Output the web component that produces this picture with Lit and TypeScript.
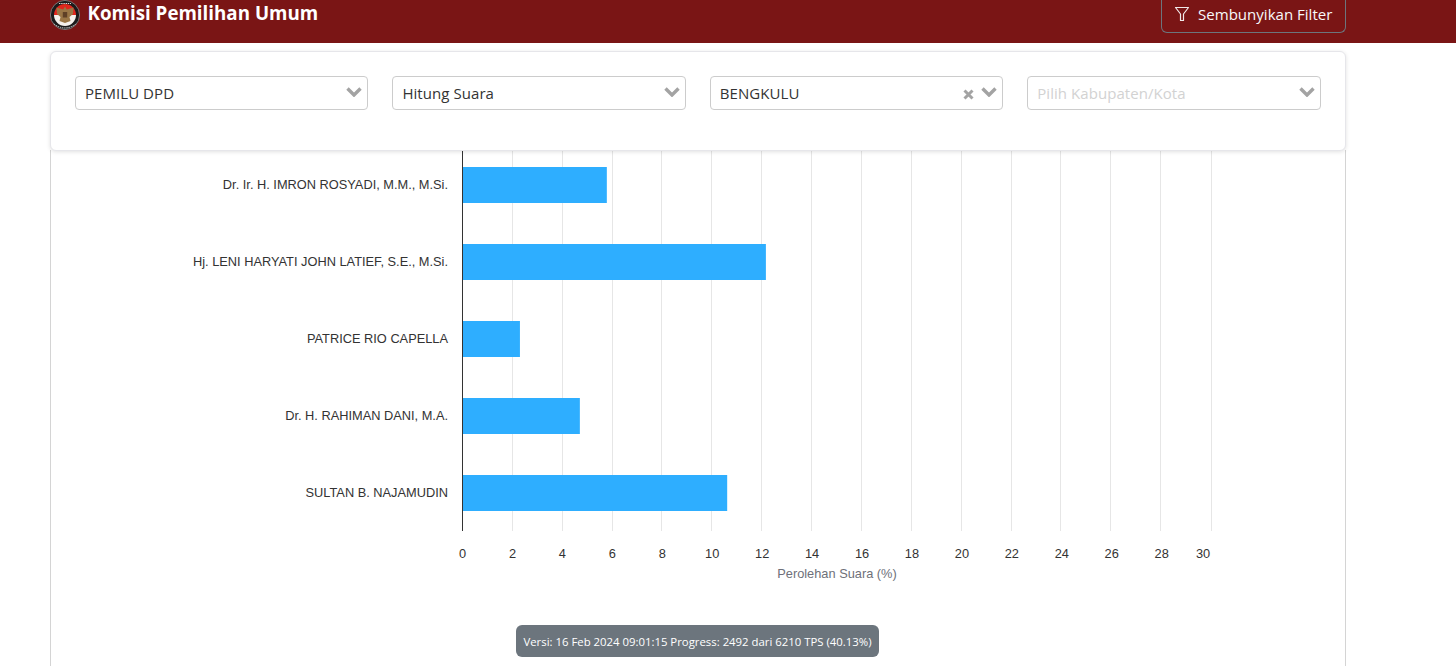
import { LitElement, html, css, svg } from "lit";
import { customElement } from "lit/decorators.js";

const CANDIDATES = [
  { name: "Dr. Ir. H. IMRON ROSYADI, M.M., M.Si.", value: 5.78, top: 17 },
  { name: "Hj. LENI HARYATI JOHN LATIEF, S.E., M.Si.", value: 12.15, top: 94 },
  { name: "PATRICE RIO CAPELLA", value: 2.3, top: 171 },
  { name: "Dr. H. RAHIMAN DANI, M.A.", value: 4.7, top: 248 },
  { name: "SULTAN B. NAJAMUDIN", value: 10.6, top: 325 },
];
const ORIGIN = 462.5;
const UNIT = 24.97;
const TICKS = Array.from({ length: 16 }, (_, i) => i * 2);
const GRID_PX = [512, 562, 612, 661, 711, 761, 811, 861, 911, 961, 1011, 1060, 1110, 1160, 1211];

@customElement("app-root")
export class AppRoot extends LitElement {
  static styles = css`
    :host { display: block; height: 666px; overflow: hidden; background: #fff; font-family: "Open Sans", "Noto Sans", sans-serif; position: relative; }
    .header { height: 43px; background: #7a1515; box-sizing: border-box; padding: 0 110px 0 50px; display: flex; justify-content: space-between; align-items: flex-start; overflow: hidden; }
    .brand { display: flex; align-items: flex-start; gap: 7.5px; color: #fff; font-weight: 700; font-size: 18.75px; line-height: 26px; }
    .brand svg { width: 30px; height: 30px; flex: none; }
    .toggle { display: flex; align-items: center; gap: 8px; box-sizing: border-box; width: 185px; height: 33px; padding: 0 12px 4px 12px; border: 1px solid #6c757d; border-top: 0; border-radius: 0 0 6px 6px; color: #f8f9fa; font-size: 15.05px; white-space: nowrap; }
    .toggle svg { width: 16px; height: 16px; flex: none; }
    .main { margin: 0 110px 0 50px; }
    .filters { position: relative; z-index: 1; margin-top: 8px; height: 100px; box-sizing: border-box; padding: 24px 24.4px 24px 24px; background: #fff; border: 1px solid #e6e6ea; border-radius: 6px; box-shadow: 0 1px 4px rgba(0,0,0,.12); display: grid; grid-template-columns: repeat(4, 1fr); gap: 24px; align-items: start; }
    .select { display: flex; align-items: center; height: 34px; box-sizing: border-box; padding: 0 5px 0 9px; border: 1px solid #ccc; border-radius: 4px; background: #fff; color: #333; font-size: 15px; }
    .select .value { flex: 1; white-space: nowrap; letter-spacing: .06px; }
    .select .placeholder { color: #d2d2d2; }
    .select svg { flex: none; display: block; }
    .chev { width: 16px; height: 10px; margin-top: -2px; }
    .clear { width: 11px; height: 11px; margin: 3px 7px 0 0; }
    .chart { margin-top: -1px; height: 520px; box-sizing: border-box; border-left: 1px solid #d4d4d4; border-right: 1px solid #d4d4d4; }
    .chart svg { display: block; width: 1294px; height: 520px; }
    .grid { stroke: #e6e6e6; stroke-width: 1; }
    .axis { stroke: #333; stroke-width: 1; }
    .bar { fill: #2eaeff; }
    .name { font: 12.8px "Liberation Sans", Arial, sans-serif; fill: #333; text-anchor: end; }
    .tick { font: 12.8px "Liberation Sans", Arial, sans-serif; fill: #333; text-anchor: middle; }
    .axis-name { font: 12.8px "Liberation Sans", Arial, sans-serif; fill: #6e7079; text-anchor: middle; }
    .version { position: absolute; left: 516px; top: 625px; width: 363px; height: 32px; box-sizing: border-box; display: flex; align-items: center; justify-content: center; background: #6c757d; border-radius: 6px; color: #fff; font-size: 11.37px; white-space: nowrap; }
  `;

  private chevron() {
    return svg`<svg class="chev" viewBox="0 0 16 10"><path d="M1.5 1.5 L8 8 L14.5 1.5" fill="none" stroke="#a3a3a3" stroke-width="3.4"/></svg>`;
  }

  private select(label: string, opts: { clear?: boolean; placeholder?: boolean } = {}) {
    return html`<div class="select">
      <span class="value ${opts.placeholder ? "placeholder" : ""}">${label}</span>
      ${opts.clear
        ? svg`<svg class="clear" viewBox="0 0 11 11"><path d="M1.5 1.5 L9.5 9.5 M9.5 1.5 L1.5 9.5" fill="none" stroke="#a3a3a3" stroke-width="3"/></svg>`
        : ""}
      ${this.chevron()}
    </div>`;
  }

  private chartSvg() {
    // SVG coordinates are page x minus 51 and page y minus 150.
    const ox = ORIGIN - 51;
    return svg`<svg viewBox="0 0 1294 520">
      ${GRID_PX.map((px) => {
        const x = px + 0.5 - 51;
        return svg`<line class="grid" x1=${x} x2=${x} y1="0" y2="381"></line>`;
      })}
      ${CANDIDATES.map(
        (c) => svg`
          <rect class="bar" x=${ox} y=${c.top} width=${c.value * UNIT} height="36"></rect>
          <text class="name" x=${448 - 51} y=${c.top + 22}>${c.name}</text>`
      )}
      <line class="axis" x1=${ox} x2=${ox} y1="0" y2="381"></line>
      ${TICKS.map((t) => {
        const x = t === 30 ? 1203 - 51 : ox + t * UNIT;
        return svg`<text class="tick" x=${x} y="408">${t}</text>`;
      })}
      <text class="axis-name" x=${837 - 51} y="428">Perolehan Suara (%)</text>
    </svg>`;
  }

  render() {
    return html`
      <div class="header">
        <div class="brand">
          <svg viewBox="0 0 30 30">
            <circle cx="15" cy="15" r="14.6" fill="#1b1b1b" stroke="#8a8a8a" stroke-width=".8"></circle>
            <path d="M4 15 A11 11 0 0 1 26 15 Z" fill="#e0261c"></path>
            <path d="M4 15 A11 11 0 0 0 26 15 Z" fill="#f5f1ec"></path>
            <path d="M15 6.5 L16.8 9.5 L18.5 9 L23.5 7.5 L23 14 L19.5 17 L20.5 21 L15 23 L9.5 21 L10.5 17 L7 14 L6.5 7.5 L11.5 9 L13.2 9.5 Z" fill="#9a7646"></path>
            <rect x="12.8" y="12" width="4.4" height="5.5" fill="#5f4026"></rect>
            <path d="M9 3.5 H21 M4 24 Q15 32 26 24" fill="none" stroke="#d8d8d8" stroke-width="1" stroke-dasharray="1.4 .8"></path>
          </svg>
          <span>Komisi Pemilihan Umum</span>
        </div>
        <div class="toggle">
          <svg viewBox="0 0 16 16"><path d="M1.5 1.5 H14.5 L9.5 8 V14.5 H6.5 V8 Z" fill="none" stroke="#f1e9e9" stroke-width="1.2" stroke-linejoin="round"></path></svg>
          <span>Sembunyikan Filter</span>
        </div>
      </div>
      <div class="main">
        <div class="filters">
          ${this.select("PEMILU DPD")}
          ${this.select("Hitung Suara")}
          ${this.select("BENGKULU", { clear: true })}
          ${this.select("Pilih Kabupaten/Kota", { placeholder: true })}
        </div>
        <div class="chart">${this.chartSvg()}</div>
      </div>
      <div class="version">Versi: 16 Feb 2024 09:01:15 Progress: 2492 dari 6210 TPS (40.13%)</div>
    `;
  }
}
